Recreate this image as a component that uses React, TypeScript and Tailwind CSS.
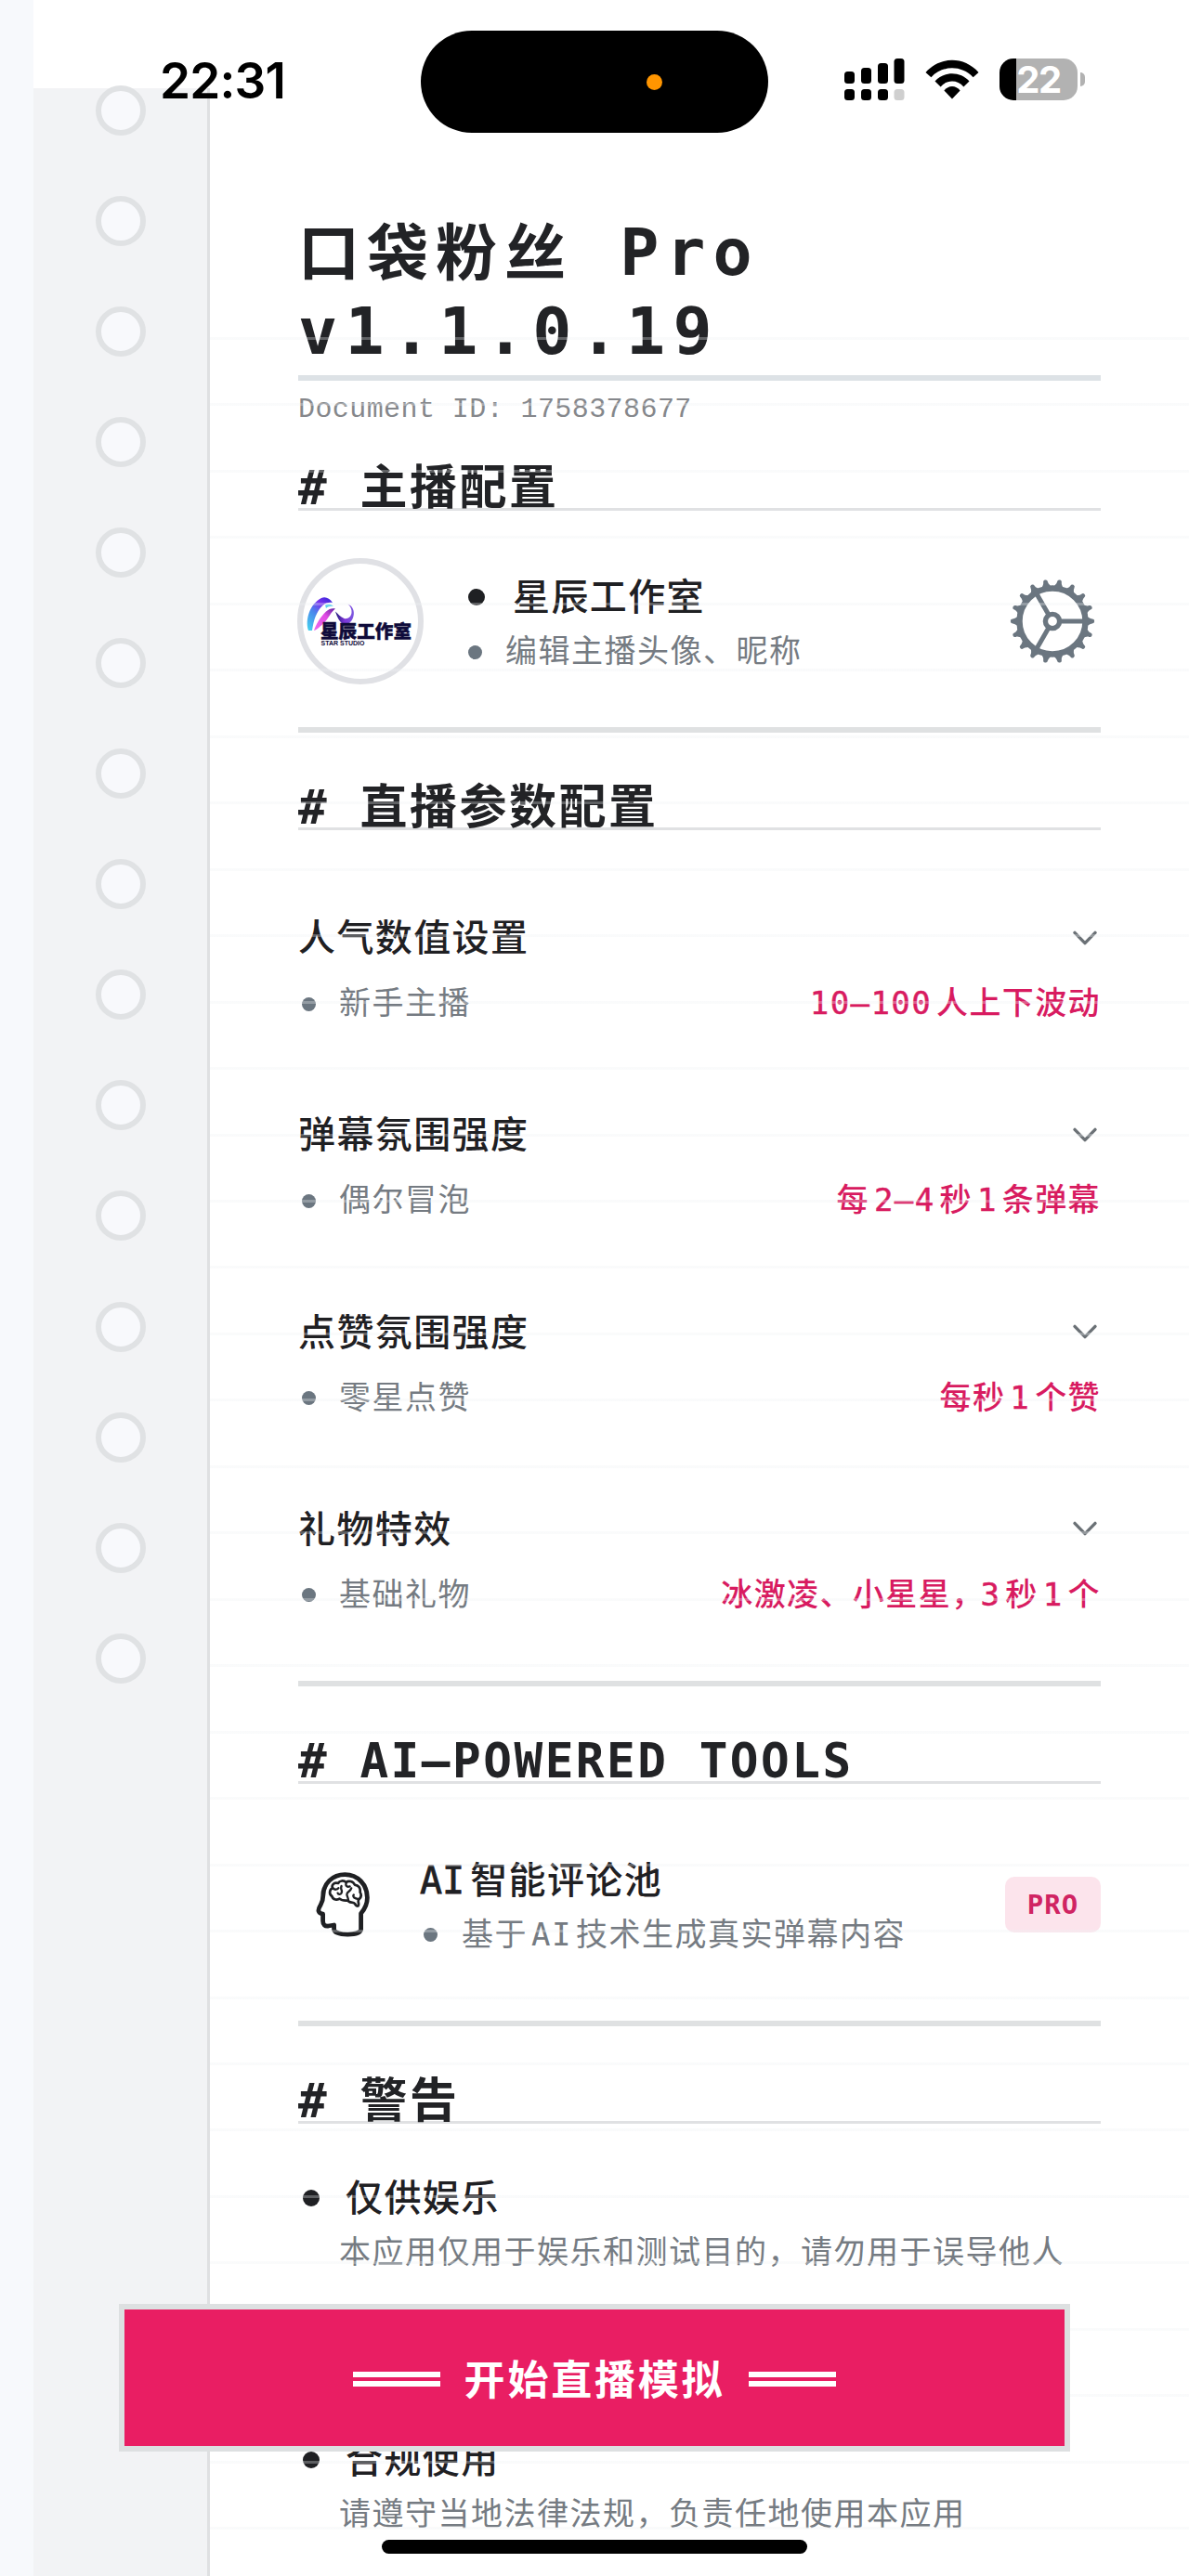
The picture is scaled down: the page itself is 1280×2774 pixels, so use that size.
import React from "react";

const CJK = "font-['Noto_Sans_CJK_SC','Noto_Sans_CJK_TC',sans-serif]";

/** Splits a string into Latin and Chinese runs so that each gets its own face. */
function Mixed({ text, latin = "" }: { text: string; latin?: string }) {
  const runs = text.match(/[\x20-\x7e–]+|[^\x20-\x7e–]+/g) ?? [];
  return (
    <>
      {runs.map((run, i) =>
        /^[\x20-\x7e–]/.test(run) ? (
          <span
            key={i}
            className={`whitespace-pre font-['DejaVu_Sans_Mono',monospace] leading-[0] ${latin}`}
          >
            {run}
          </span>
        ) : (
          <span key={i} className={run.endsWith("，") ? "-mr-[9px]" : ""}>
            {run}
          </span>
        ),
      )}
    </>
  );
}

function Heading({ text }: { text: string }) {
  return (
    <h2 className="h-[56px] whitespace-nowrap border-b-[3px] border-[#e0e1e3] text-[51px] font-bold leading-[55px] tracking-[2.5px] text-[#222326]">
      <Mixed text={text} />
    </h2>
  );
}

function Divider({ className }: { className: string }) {
  return <div className={`h-[6px] bg-[#dfe1e2] ${className}`} />;
}

function Label({ text }: { text: string }) {
  return (
    <span className="whitespace-nowrap text-[40px] font-medium leading-[56px] tracking-[1.4px] text-[#1f2023]">
      <Mixed text={text} latin="mr-[6px] tracking-[0px] [-webkit-text-stroke:0.8px_#1f2023]" />
    </span>
  );
}

function Note({ text }: { text: string }) {
  return (
    <span className="whitespace-nowrap text-[34px] leading-[48px] tracking-[1.5px] text-[#757b82]">
      <Mixed text={text} latin="mx-[4px]" />
    </span>
  );
}

function SmallDot() {
  return <span className="size-[15px] shrink-0 translate-y-[3px] rounded-full bg-[#6b7680]" />;
}

function BigDot() {
  return <span className="size-[18px] shrink-0 translate-y-[3px] rounded-full bg-[#1f2023]" />;
}

function Chevron() {
  return (
    <svg className="mr-[3px] mt-[5px] h-[18px] w-[28px]" viewBox="0 0 28 18" fill="none">
      <path
        d="M3 3.4 L14 14.6 L25 3.4"
        stroke="#6b7176"
        strokeWidth="3.4"
        strokeLinecap="round"
        strokeLinejoin="round"
      />
    </svg>
  );
}

function Gear() {
  const teeth = Array.from({ length: 18 }, (_, i) => i * 20);
  return (
    <svg className="size-[92px]" viewBox="-46 -46 92 92" fill="none" stroke="#6b7680">
      <circle r="35.5" strokeWidth="6.4" />
      <circle r="7.6" strokeWidth="5.4" />
      {[0, 120, 240].map((a) => (
        <path key={a} d="M9 0 H34" strokeWidth="5" transform={`rotate(${a})`} />
      ))}
      {teeth.map((a) => (
        <path
          key={a}
          d="M36 -5.4 C39 -4.8 40 -2.4 42.8 -2.4 A2.4 2.4 0 0 1 42.8 2.4 C40 2.4 39 4.8 36 5.4 Z"
          fill="#6b7680"
          stroke="none"
          transform={`rotate(${a})`}
        />
      ))}
    </svg>
  );
}

function BrainHead() {
  return (
    <svg
      className="h-[70px] w-[58px]"
      viewBox="0 0 58 70"
      fill="none"
      stroke="#1f2023"
      strokeLinecap="round"
      strokeLinejoin="round"
    >
      <path
        strokeWidth="4.8"
        d="M48.6 62 V44.5 C52.5 40 55.4 34.5 55.4 27.5 C55.4 13.4 45 2.6 31.4 2.6 C18 2.6 7.8 12.4 7.8 25.5 C7.8 31.5 6.6 33 4.6 36.4 C2 40.8 2 44 7.6 45.2 V52.5 C7.6 57 10 58.4 13.4 58 L19.6 57 V62 C21 68.4 47 69 48.6 62 Z"
      />
      <path
        strokeWidth="2.7"
        d="M24 12 C19 10.5 16.6 14.5 18.2 17.2 C14.4 18.4 14 24 17.4 26 C18.2 30 23.6 30.4 25.6 28.6 C28.4 31.4 33 30.6 34.6 30.6 C36 33.6 40.4 31.6 42 34 C43.4 36.6 44.6 37 45.6 36.4 C47.2 34.4 44.6 31.4 46.2 29.6 C49.4 27 49 23.8 47.6 21.6 C48.4 17 45.4 13.6 42 13.8 C40 9.4 35 9 32.6 11 C30 8.6 25.6 9 24 12 Z"
      />
      <path
        strokeWidth="2.3"
        d="M18.4 17.4 C20.4 19.4 23.2 19 24.4 17.2 M27.6 15 C26 19.6 29.2 19 27.6 22.4 C26.6 24.4 24 24 23.6 22.6 M32.8 11.6 C31.4 15 34 16.4 36.6 15.4 M38.2 17.4 C37 21.6 33.6 20.6 33.4 24 C33.4 26 34.6 26.6 35 30 M40.8 24.4 C39.2 27 42 28.4 46 29.2"
      />
    </svg>
  );
}

function Avatar() {
  return (
    <div className="-ml-px size-[136px] shrink-0 overflow-hidden rounded-full border-[6px] border-[#e0e1e5] bg-white">
      <svg className="size-[124px]" viewBox="6 6 124 124">
        <defs>
          <linearGradient id="swooshBlue" x1="0" y1="1" x2="0.7" y2="0">
            <stop offset="0" stopColor="#43d6ee" />
            <stop offset="0.5" stopColor="#4a86ec" />
            <stop offset="0.8" stopColor="#7a30ee" />
            <stop offset="1" stopColor="#4b2be0" />
          </linearGradient>
          <linearGradient id="swooshPink" x1="0" y1="1" x2="1" y2="0">
            <stop offset="0" stopColor="#e96bee" />
            <stop offset="0.6" stopColor="#e24be4" />
            <stop offset="1" stopColor="#5a1f9e" />
          </linearGradient>
          <linearGradient id="swooshViolet" x1="0" y1="0" x2="1" y2="0">
            <stop offset="0" stopColor="#23207a" />
            <stop offset="0.5" stopColor="#7d35d8" />
            <stop offset="1" stopColor="#7d5ae0" />
          </linearGradient>
        </defs>
        <path
          fill="url(#swooshBlue)"
          d="M12 78 C8 66 14 49 26 43 C30 41 35 43 38 48 C31 46.5 25.5 51 21 60 C17.5 67 17 73 16 78 Z"
        />
        <path
          fill="url(#swooshPink)"
          d="M18 78 C20 72 25 63 31 57.5 C34 54.5 38 53.5 41 54.5 C36 58 34 65 28.5 70 C25 73 22 77 18 78 Z"
        />
        <path fill="#5fd0ee" d="M30 50.5 C34 48.5 37 49.5 39 52 C35.5 51.5 33 52.5 31 54 Z" />
        <path
          fill="url(#swooshViolet)"
          d="M41 57.5 C44 60 46.5 63.5 50.5 65 C54 66 58 63.5 58.5 59 C59 55.5 57.5 52 54.5 49.5 C59.5 51.5 62 57 60.5 62.5 C59 69 53.5 73.5 49 71 C45.5 68.5 43 64 41 57.5 Z"
        />
        <text
          x="25"
          y="85.5"
          fontSize="19.5"
          fontWeight="900"
          fill="#0f0b3a"
          stroke="#0f0b3a"
          strokeWidth="0.5"
          textLength="98"
          fontFamily="'Noto Sans CJK SC', sans-serif"
        >
          星辰工作室
        </text>
        <text
          x="25.5"
          y="94"
          fontSize="7"
          fontWeight="700"
          fill="#0f0b3a"
          textLength="47"
          fontFamily="'Liberation Sans', sans-serif"
        >
          STAR STUDIO
        </text>
      </svg>
    </div>
  );
}

function Gutter() {
  return (
    <div className="mt-[95px] flex w-[190px] shrink-0 flex-col items-center gap-[65.05px] border-r-[3px] border-[#dfe0e2] bg-[#f2f3f5]">
      {Array.from({ length: 15 }, (_, i) => (
        <span
          key={i}
          className="size-[54px] shrink-0 rounded-full border-[6px] border-[#e0e2e4] bg-[#f8f9fc] first:-mt-[3px]"
        />
      ))}
    </div>
  );
}

const settings = [
  { label: "人气数值设置", level: "新手主播", value: "10–100人上下波动" },
  { label: "弹幕氛围强度", level: "偶尔冒泡", value: "每2–4秒1条弹幕" },
  { label: "点赞氛围强度", level: "零星点赞", value: "每秒1个赞" },
  { label: "礼物特效", level: "基础礼物", value: "冰激凌、小星星，3秒1个" },
];

const warnings = [
  { title: "仅供娱乐", body: "本应用仅用于娱乐和测试目的，请勿用于误导他人" },
  { title: "合规使用", body: "请遵守当地法律法规，负责任地使用本应用" },
];

function StatusBar() {
  return (
    <div className="absolute inset-x-0 top-[33px] flex h-[110px]">
      <div className="ml-[172px] w-[281px] pt-[22px] font-['Inter',sans-serif] text-[53px] font-semibold leading-[64px] tracking-[-0.8px] text-black">
        22:31
      </div>
      <div className="flex h-[110px] w-[374px] items-center justify-end rounded-full bg-black pr-[114px]">
        <span className="size-[17px] rounded-full bg-[#ff9500]" />
      </div>
      <svg className="ml-[82px] mt-[30px] h-[46px] w-[65px]" viewBox="0 0 65 46">
        <rect x="0" y="14" width="11" height="13" rx="3.5" />
        <rect x="18" y="10" width="11" height="17" rx="3.5" />
        <rect x="36" y="5" width="11" height="22" rx="3.5" />
        <rect x="53.5" y="0" width="11" height="27" rx="3.5" />
        <rect x="0" y="33" width="11" height="12" rx="3.5" />
        <rect x="18" y="33" width="11" height="12" rx="3.5" />
        <rect x="36" y="33" width="11" height="12" rx="3.5" />
        <rect x="53.5" y="33" width="11" height="12" rx="3.5" fill="#cfcfcf" />
      </svg>
      <svg className="ml-[21px] mt-[31px] h-[43px] w-[60px]" viewBox="0 0 60 43">
        <path d="M1.5 14 C17 -3.6 43 -3.6 58.5 14 L52.6 19.2 C40 6 20 6 7.4 19.2 Z" />
        <path d="M11.5 23.6 C21 12.6 39 12.6 48.5 23.6 L42.4 29.4 C35.6 21.6 24.4 21.6 17.6 29.4 Z" />
        <path d="M21.4 33.4 C26 27.4 34 27.4 38.6 33.4 L30 42.4 Z" />
      </svg>
      <div className="ml-[21px] mt-[30px] flex h-[45px] w-[84px] items-center justify-center rounded-[15px] bg-[linear-gradient(90deg,#000_18px,#b2b2b2_18px)] font-['Inter',sans-serif] text-[40px] font-bold leading-[45px] tracking-[-1.5px] text-white">
        22
      </div>
      <div className="ml-[3px] mt-[45px] h-[15px] w-[5px] rounded-r-full bg-[#b2b2b2]" />
    </div>
  );
}

function Bars() {
  return (
    <span className="mt-[2px] flex w-[94px] flex-col gap-[4px]">
      <span className="h-[6px] bg-white" />
      <span className="h-[6px] bg-white" />
    </span>
  );
}

export default function App() {
  return (
    <div className={`relative flex h-[2774px] w-[1280px] overflow-hidden bg-white ${CJK}`}>
      <div className="w-[36px] shrink-0 bg-[#f7f9fc]" />
      <Gutter />

      <main className="ml-[95px] w-[864px] shrink-0 pt-[225px]">
        <h1 className="w-[700px] text-[66px] font-bold leading-[85px] tracking-[8px] text-[#222326]">
          <Mixed text="口袋粉丝 Pro" latin="text-[70px]" />
          <br />
          <Mixed text="v1.1.0.19" latin="text-[70px] tracking-[8.3px]" />
        </h1>
        <div className="mt-[9px] h-[6px] bg-[#dde2e6]" />
        <p className="mt-[13px] whitespace-nowrap font-['Liberation_Mono',monospace] text-[30px] leading-[36px] tracking-[0.42px] text-[#85878b]">
          Document ID: 1758378677
        </p>

        <section className="mt-[35px]">
          <Heading text="# 主播配置" />
          <div className="mt-[51px] flex h-[136px] items-center">
            <Avatar />
            <div className="mb-[3px] ml-[48px] flex flex-1 flex-col gap-[7px]">
              <div className="flex items-center gap-[30px]">
                <BigDot />
                <Label text="星辰工作室" />
              </div>
              <div className="flex items-center gap-[25px]">
                <SmallDot />
                <Note text="编辑主播头像、昵称" />
              </div>
            </div>
            <div className="mr-[6px]">
              <Gear />
            </div>
          </div>
        </section>

        <Divider className="mt-[46px]" />

        <section className="mt-[49px]">
          <Heading text="# 直播参数配置" />
          <div className="mt-[85px] flex flex-col gap-[89.3px]">
            {settings.map((s) => (
              <div key={s.label} className="flex flex-col gap-[19px]">
                <div className="flex items-center justify-between">
                  <Label text={s.label} />
                  <Chevron />
                </div>
                <div className="flex items-center gap-[25px] pl-[4px]">
                  <SmallDot />
                  <Note text={s.level} />
                  <span className="ml-auto whitespace-nowrap text-[34px] font-medium leading-[48px] tracking-[1.4px] text-[#d81b60]">
                    <Mixed
                      text={s.value}
                      latin="mx-[5px] [-webkit-text-stroke:0.5px_#d81b60]"
                    />
                  </span>
                </div>
              </div>
            ))}
          </div>
        </section>

        <Divider className="mt-[71px]" />

        <section className="mt-[49px]">
          <Heading text="# AI–POWERED TOOLS" />
          <div className="mt-[73px] flex h-[111px] items-center">
            <div className="ml-[19px] mt-[4px]">
              <BrainHead />
            </div>
            <div className="ml-[54px] flex flex-1 flex-col gap-[7px]">
              <Label text="AI智能评论池" />
              <div className="flex items-center gap-[26px] pl-[4px]">
                <SmallDot />
                <Note text="基于AI技术生成真实弹幕内容" />
              </div>
            </div>
            <span className="mt-[4px] flex h-[60px] w-[103px] items-center justify-center rounded-[10px] bg-[#fce4ec] font-['DejaVu_Sans_Mono',monospace] text-[29px] font-bold tracking-[1px] text-[#d02463]">
              PRO
            </span>
          </div>
        </section>

        <Divider className="mt-[71px]" />

        <section className="mt-[49px]">
          <Heading text="# 警告" />
          <div className="mt-[49px] flex flex-col gap-[171px]">
            {warnings.map((w) => (
              <div key={w.title} className="flex flex-col gap-[7px]">
                <div className="flex items-center gap-[28px] pl-[5px]">
                  <BigDot />
                  <Label text={w.title} />
                </div>
                <div className="flex pl-[44px]">
                  <Note text={w.body} />
                </div>
              </div>
            ))}
          </div>
        </section>
      </main>

      {/* ruled paper lines, drawn over the text */}
      <div className="pointer-events-none absolute bottom-0 left-[226px] right-0 top-[363px] bg-[repeating-linear-gradient(180deg,rgba(238,241,243,0.3)_0px,rgba(238,241,243,0.3)_3px,transparent_3px,transparent_71.46px)]" />

      <StatusBar />

      <button className="absolute left-[128px] top-[2481px] flex h-[159px] w-[1024px] items-center justify-center gap-[26px] border-[6px] border-[#dde0e1] bg-[#e91e63] text-[44px] font-bold leading-[60px] tracking-[2.8px] text-white">
        <Bars />
        <span className="-mt-[2px]">开始直播模拟</span>
        <Bars />
      </button>

      <div className="absolute left-[411px] top-[2735px] h-[15px] w-[458px] rounded-full bg-black" />
    </div>
  );
}
